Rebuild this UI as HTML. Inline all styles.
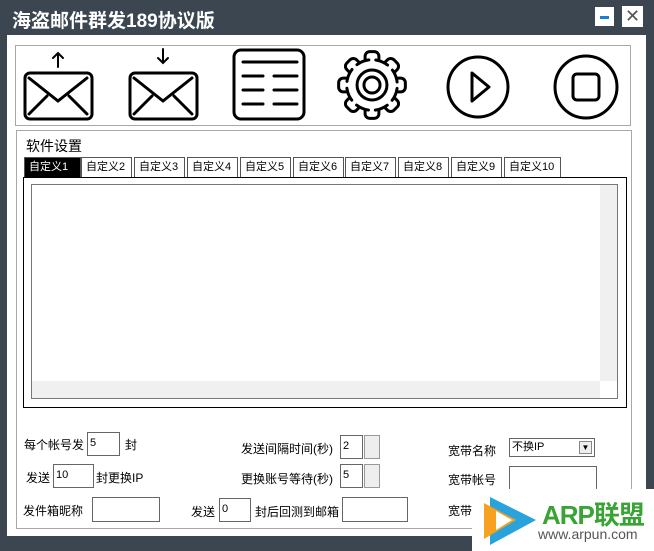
<!DOCTYPE html>
<html><head><meta charset="utf-8"><style>
*{margin:0;padding:0;box-sizing:border-box}
html,body{width:654px;height:551px;overflow:hidden}
body{background:#3b4650;position:relative;font-family:"Liberation Sans","Noto Sans CJK SC","WenQuanYi Zen Hei",sans-serif;font-size:12px;color:#000}
.a{position:absolute;white-space:nowrap}
.title{left:12px;top:6px;color:#fff;font-size:19px;font-weight:bold}
.main{left:7px;top:35px;width:639px;height:501px;background:#fff}
.box{border:1px solid #a8a8a8}
.tab{position:absolute;top:157px;height:20px;border:1px solid #555;border-bottom:none;font-size:11px;line-height:19px;padding-left:4px;background:#fff;white-space:nowrap;overflow:hidden}
.in{position:absolute;border:1px solid #666;background:#fff;font-size:11px;padding-left:2px;line-height:20px}
.l{position:absolute;font-size:12px;white-space:nowrap}
.spin{position:absolute;width:16px;height:24px;border:1px solid #999;background:#eee}
</style></head><body>
<div class="a title">海盗邮件群发189协议版</div>
<div class="a" style="left:595px;top:7px;width:19px;height:19px;background:#fff"><div class="a" style="left:5px;top:9px;width:9px;height:3px;background:#1a7fd4"></div></div>
<div class="a" style="left:622px;top:6px;width:21px;height:21px;background:#fff;color:#555;font-size:18px;text-align:center;line-height:21px">✕</div>
<div class="a main"></div>
<div class="a box" style="left:15px;top:45px;width:616px;height:81px"></div>
<svg class="a" style="left:15px;top:45px" width="616" height="81" fill="none" stroke="#000" stroke-width="3" stroke-linecap="round">
<rect x="10" y="28" width="67" height="46" rx="5"/><path d="M14 33 L43 56 L72 33 M14 69 L32 51 M72 69 L54 51"/><path d="M43 22 V8 M38 13 L43 8 L48 13" stroke-width="2"/>
<rect x="115" y="28" width="67" height="46" rx="5"/><path d="M119 33 L148 56 L177 33 M119 69 L137 51 M177 69 L159 51"/><path d="M148 4 V18 M143 13 L148 18 L153 13" stroke-width="2"/>
<rect x="219" y="5" width="70" height="69" rx="7"/><path d="M228 17 H282 M228 31 H248 M259 31 H282 M228 45 H248 M259 45 H282 M228 59 H248 M259 59 H282"/>
<g transform="translate(357 40) scale(1.15)" stroke-width="2.6">
<g fill="#fff">
<rect x="-6" y="-29" width="12" height="12" rx="4"/>
<rect x="-6" y="-29" width="12" height="12" rx="4" transform="rotate(45)"/>
<rect x="-6" y="-29" width="12" height="12" rx="4" transform="rotate(90)"/>
<rect x="-6" y="-29" width="12" height="12" rx="4" transform="rotate(135)"/>
<rect x="-6" y="-29" width="12" height="12" rx="4" transform="rotate(180)"/>
<rect x="-6" y="-29" width="12" height="12" rx="4" transform="rotate(225)"/>
<rect x="-6" y="-29" width="12" height="12" rx="4" transform="rotate(270)"/>
<rect x="-6" y="-29" width="12" height="12" rx="4" transform="rotate(315)"/>
</g>
<circle r="21" fill="#fff" stroke="none"/>
<circle r="22" stroke-dasharray="11.3 6" stroke-dashoffset="-3"/>
<circle r="13"/><circle r="7"/>
</g>
<circle cx="463" cy="42" r="30"/><path d="M457 28 L474 42 L457 56 Z" stroke-linejoin="round"/>
<circle cx="571" cy="42" r="31"/><rect x="558" y="29" width="26" height="26" rx="4"/>
</svg>
<div class="a box" style="left:16px;top:130px;width:616px;height:399px"></div>
<div class="l" style="left:26px;top:136px;font-size:14px">软件设置</div>
<div class="tab" style="left:24px;width:57px;background:#000;color:#fff">自定义1</div>
<div class="tab" style="left:81px;width:51px">自定义2</div>
<div class="tab" style="left:134px;width:51px">自定义3</div>
<div class="tab" style="left:187px;width:51px">自定义4</div>
<div class="tab" style="left:240px;width:51px">自定义5</div>
<div class="tab" style="left:293px;width:51px">自定义6</div>
<div class="tab" style="left:345px;width:51px">自定义7</div>
<div class="tab" style="left:398px;width:51px">自定义8</div>
<div class="tab" style="left:451px;width:51px">自定义9</div>
<div class="tab" style="left:504px;width:57px">自定义10</div>
<div class="a" style="left:23px;top:177px;width:604px;height:231px;border:1px solid #000"></div>
<div class="a" style="left:31px;top:184px;width:587px;height:215px;border:1px solid #777"></div>
<div class="a" style="left:600px;top:185px;width:17px;height:196px;background:#f0f0f0"></div>
<div class="a" style="left:32px;top:381px;width:568px;height:17px;background:#f0f0f0"></div>
<div class="l" style="left:24px;top:436px">每个帐号发</div>
<div class="in" style="left:87px;top:432px;width:33px;height:24px">5</div>
<div class="l" style="left:125px;top:436px">封</div>
<div class="l" style="left:26px;top:469px">发送</div>
<div class="in" style="left:53px;top:464px;width:41px;height:24px">10</div>
<div class="l" style="left:96px;top:469px">封更换IP</div>
<div class="l" style="left:23px;top:502px">发件箱昵称</div>
<div class="in" style="left:92px;top:497px;width:68px;height:25px"></div>
<div class="l" style="left:241px;top:440px">发送间隔时间(秒)</div>
<div class="in" style="left:340px;top:435px;width:23px;height:24px">2</div>
<div class="spin" style="left:364px;top:435px"></div>
<div class="l" style="left:241px;top:470px">更换账号等待(秒)</div>
<div class="in" style="left:340px;top:464px;width:23px;height:24px">5</div>
<div class="spin" style="left:364px;top:464px"></div>
<div class="l" style="left:191px;top:503px">发送</div>
<div class="in" style="left:219px;top:498px;width:32px;height:24px">0</div>
<div class="l" style="left:255px;top:503px">封后回测到邮箱</div>
<div class="in" style="left:342px;top:497px;width:66px;height:25px"></div>
<div class="l" style="left:448px;top:442px">宽带名称</div>
<div class="in" style="left:509px;top:438px;width:86px;height:19px;line-height:17px">不换IP<span style="position:absolute;right:2px;top:2px;width:13px;height:13px;border:1px solid #888;background:#eee;font-size:8px;text-align:center;line-height:12px">▼</span></div>
<div class="l" style="left:448px;top:471px">宽带帐号</div>
<div class="in" style="left:509px;top:466px;width:88px;height:24px"></div>
<div class="l" style="left:448px;top:502px">宽带</div>
<div class="a" style="left:472px;top:489px;width:182px;height:62px;background:#fff"></div>
<svg class="a" style="left:476px;top:489px" width="70" height="62"><path d="M14 8 L60 31 L14 56 Z" fill="#2aa3dd"/><path d="M8 14 L40 31 L8 50 Z" fill="#f6a11f"/><path d="M20 22 L36 31 L20 41 Z" fill="#fff"/></svg>
<div class="l" style="left:542px;top:495px;font-size:26px;font-weight:bold;color:#3aa336;letter-spacing:-1px">ARP联盟</div>
<div class="l" style="left:538px;top:526px;font-size:14px;color:#555">www.arpun.com</div>
</body></html>
